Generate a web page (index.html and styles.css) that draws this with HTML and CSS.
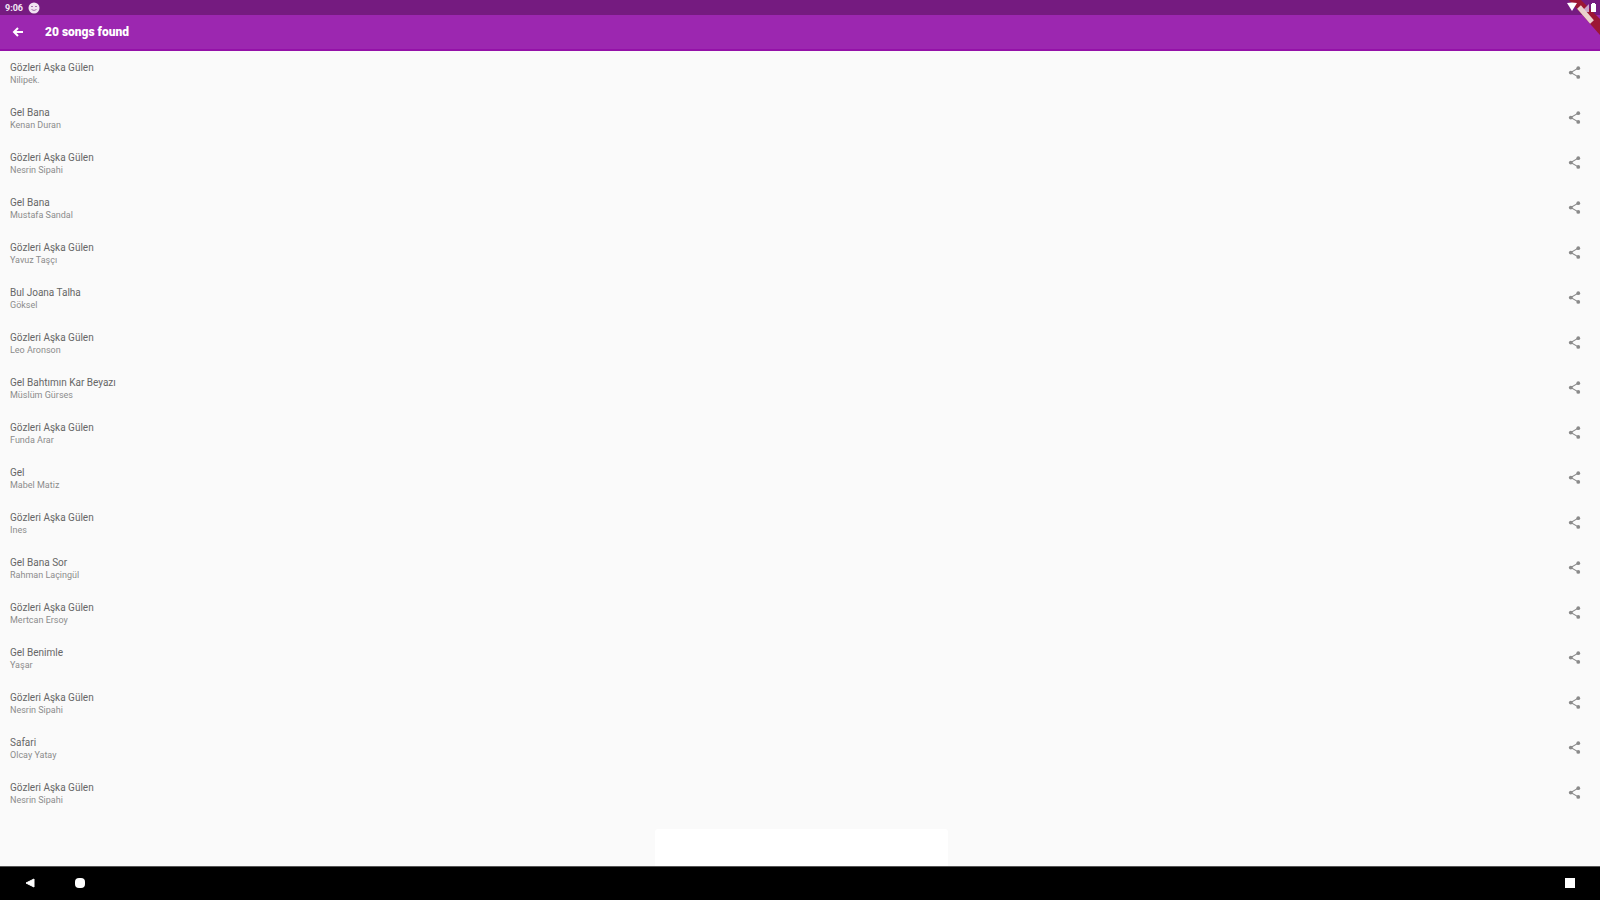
FILE: index.html
```html
<!DOCTYPE html>
<html lang="en">
<head>
<meta charset="utf-8">
<title>Songs</title>
<link rel="stylesheet" href="styles.css">
</head>
<body>
<svg class="defs" aria-hidden="true">
  <symbol id="share" viewBox="0 0 24 24"><path d="M18 5L6 12l12 7" fill="none" stroke="currentColor" stroke-width="1.800"/><circle cx="18" cy="5" r="3"/><circle cx="6" cy="12" r="3"/><circle cx="18" cy="19" r="3"/></symbol>
</svg>
<div class="status">
  <div class="status-group"><span>9:06</span>
    <svg class="badge" viewBox="0 0 12 12"><circle cx="6" cy="6" r="5.500" fill="#f0e4f2"/><path d="M3 4.500h2M7 4.500h2M3.500 7.500q2.500 2 5 0" stroke="#a673ad" fill="none"/></svg>
  </div>
</div>
<header class="appbar">
  <button class="back" aria-label="Back"><svg viewBox="0 0 12 12"><path d="M11 6H2M6 2L2 6l4 4" fill="none" stroke="#fff" stroke-width="2"/></svg></button>
  <h1>20 songs found</h1>
</header>
<svg class="ribbon" viewBox="0 0 36 36" aria-hidden="true">
  <path d="M5 0h12l19 19v16z" fill="#9c1734"/>
  <path d="M3 3q5-1 10 0L8 11z" fill="#fff"/>
  <path d="M25 4v8h-8z" fill="#c9a5cb"/>
  <path d="M27 4h1V3h3v1h1v8h-5z" fill="#fff"/>
  <path d="M15 7l13 15" stroke="#ead2cd" stroke-width="5"/>
</svg>
<main>
  <ul class="songs" id="songs"></ul>
  <div class="toast"></div>
</main>
<nav class="sysnav">
  <div class="nav-group">
    <button aria-label="Back"><svg viewBox="0 0 12 12"><path d="M2 6l8-4v8z" stroke="#fff" stroke-linejoin="round"/></svg></button>
    <button aria-label="Home"><svg viewBox="0 0 12 12"><rect x="1" y="1" width="10" height="10" rx="4"/></svg></button>
  </div>
  <button aria-label="Recent apps"><svg viewBox="0 0 12 12"><rect x="1" y="1" width="10" height="10"/></svg></button>
</nav>
<script src="songs.js"></script>
</body>
</html>
```
FILE: styles.css
```css
* { box-sizing: border-box; }
body { margin: 0; height: 100vh; display: flex; flex-direction: column; overflow: hidden; background: #fafafa; font-family: Roboto, sans-serif; }
button { border: 0; padding: 0; background: none; display: flex; color: inherit; }
.defs { position: absolute; width: 0; height: 0; }
.status { display: flex; align-items: center; height: 15px; flex: none; padding: 0 5px; background: #751b80; color: #f3e8f5; font-size: 9px; font-weight: 700; }
.status-group { display: flex; align-items: center; gap: 5px; }
.badge { width: 12px; height: 12px; }
.appbar { display: flex; align-items: center; gap: 21px; height: 36px; flex: none; padding: 0 12px; background: #9c27b0; border-bottom: 2px solid #9411a8; color: #fff; }
.back svg { width: 12px; height: 12px; }
h1 { margin: 0; font-size: 12px; line-height: 16px; font-weight: 900; }
.ribbon { position: absolute; top: 0; right: 0; width: 36px; height: 36px; }
main { position: relative; flex: 1; min-height: 0; }
.songs { list-style: none; margin: 0; padding: 0; }
.song { display: flex; justify-content: space-between; align-items: center; height: 45px; padding: 0 18px 0 10px; color: #666; }
.title { font-size: 10px; line-height: 13px; }
.artist { font-size: 9px; line-height: 13px; color: #8c8c8c; }
.song button { color: #8a8a8a; padding-bottom: 2px; }
.song svg { width: 15px; height: 15px; fill: currentColor; }
.toast { position: absolute; left: 50%; bottom: 0; width: 293px; height: 37px; margin-left: -145px; background: #fff; border-radius: 3px 3px 0 0; }
.sysnav { display: flex; justify-content: space-between; align-items: center; height: 34px; flex: none; padding: 0 24px 2px; background: #000; border-top: 1px solid #555; }
.nav-group { display: flex; gap: 38px; }
.sysnav svg { width: 12px; height: 12px; fill: #fff; }
```
FILE: songs.js
```js
const songs = [
  ["Gözleri Aşka Gülen", "Nilipek."],
  ["Gel Bana", "Kenan Duran"],
  ["Gözleri Aşka Gülen", "Nesrin Sipahi"],
  ["Gel Bana", "Mustafa Sandal"],
  ["Gözleri Aşka Gülen", "Yavuz Taşçı"],
  ["Bul Joana Talha", "Göksel"],
  ["Gözleri Aşka Gülen", "Leo Aronson"],
  ["Gel Bahtımın Kar Beyazı", "Müslüm Gürses"],
  ["Gözleri Aşka Gülen", "Funda Arar"],
  ["Gel", "Mabel Matiz"],
  ["Gözleri Aşka Gülen", "Ines"],
  ["Gel Bana Sor", "Rahman Laçingül"],
  ["Gözleri Aşka Gülen", "Mertcan Ersoy"],
  ["Gel Benimle", "Yaşar"],
  ["Gözleri Aşka Gülen", "Nesrin Sipahi"],
  ["Safari", "Olcay Yatay"],
  ["Gözleri Aşka Gülen", "Nesrin Sipahi"]
];
document.getElementById("songs").innerHTML = songs.map(([title, artist]) => `
  <li class="song">
    <div><div class="title">${title}</div><div class="artist">${artist}</div></div>
    <button aria-label="Share ${title}"><svg><use href="#share"/></svg></button>
  </li>`).join("");
```
